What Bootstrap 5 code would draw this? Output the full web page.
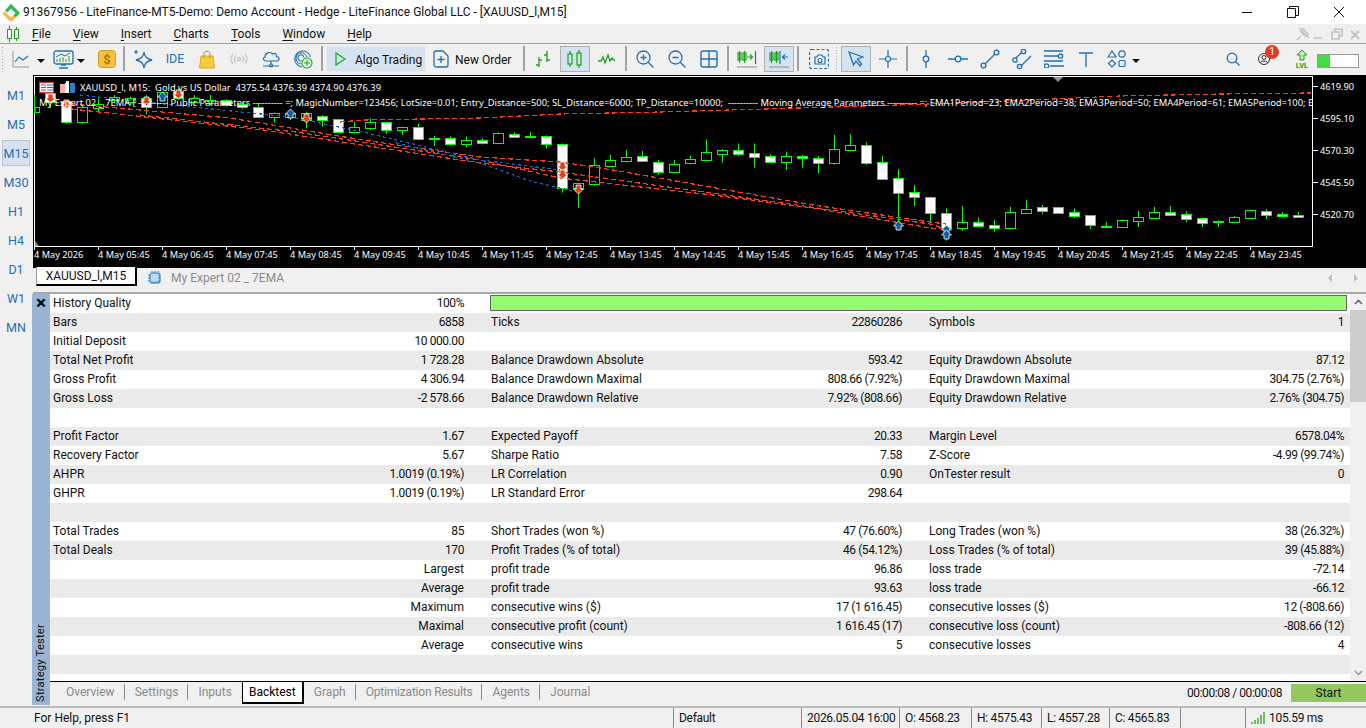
<!DOCTYPE html>
<html lang="en">
<head>
    <meta charset="UTF-8">
    <meta name="viewport" content="width=device-width, initial-scale=1.0">
    <title>LiteFinance MT5 - Strategy Tester</title>
    <link href="https://cdn.jsdelivr.net/npm/bootstrap@5.3.0/dist/css/bootstrap.min.css" rel="stylesheet">
    <style>
        html, body { height: 100%; overflow: hidden; }
        body { font-family: Roboto, "Liberation Sans", sans-serif; font-size: 12px; line-height: 16px; color: #111; background: #f0f0f0; }
        .app-shell { width: 1366px; height: 728px; }
        .title-bar { height: 24px; background: #fff; padding-left: 2px; }
        .title-logo { margin-right: 3px; flex: none; }
        .win-ctl { width: 46px; height: 24px; }
        .menu-bar { height: 19px; padding-left: 6px; background: #f0f0f0; }
        .menu-entry { margin-right: 22px; }
        .menu-entry u { text-underline-offset: 2px; }
        .tool-bar { height: 32px; border-top: 1px solid #a0a0a0; padding-top: 2px; background: #f0f0f0; }
        .grip { width: 3px; height: 26px; flex: none; background-image: radial-gradient(#aaa 1px, transparent 1px); background-size: 3px 3px; }
        .grip-first { margin: 0 1px 0 1px; }
        .grip-mid { margin-right: 3px; }
        .tb-btn { width: 32px; height: 26px; flex: none; }
        .tb-active { background: #d5e3f1; box-shadow: inset 0 0 0 1px #b0b0b0; width: 30px; margin: 0 1px; }
        .tb-sep { width: 2px; height: 25px; margin: 0 2px; background: #a2a2a2; flex: none; }
        .algo-btn { width: 100px; height: 26px; margin-left: 1px; margin-right: 4px; background: #d5e3f1; border: 1px solid #e4ecf4; padding-left: 8px; gap: 9px; }
        .order-btn { width: 91px; height: 26px; padding-left: 3px; gap: 6px; }
        .btn-text { padding-top: 2px; }
        .caret-down { width: 0; height: 0; flex: none; border-left: 4px solid transparent; border-right: 4px solid transparent; border-top: 4px solid #111; }
        .blue-label { color: #1f6fb5; font-size: 12.5px; }
        .user-badge { left: 17px; top: -1px; width: 14px; height: 14px; background: #e23a2a; font-size: 11px; line-height: 14px; }
        .level-meter { width: 42px; height: 14px; margin: 0 7px 0 -1px; border: 1px solid #999; --bs-progress-bar-bg: #43dd43; }
        .tf-col { width: 33px; flex: none; padding-top: 7px; gap: 3px; color: #1f6fb5; font-size: 12.5px; }
        .tf-item { width: 28px; height: 26px; margin-left: 2px; padding-top: 2px; }
        .tf-on { background: #d5e3f1; box-shadow: inset 0 0 0 1px #b8c4d0; }
        .chart-box { height: 193px; background: #000; }
        .chart-box svg { display: block; }
        .chart-text { font-family: "Noto Sans", "Liberation Sans", sans-serif; font-size: 9.2px; fill: #fff; }
        .chart-long { font-size: 9.35px; }
        .doc-tabs { height: 24px; }
        .doc-tab { width: 101px; height: 19px; margin: -1px 0 0 3px; background: #fff; border: 1px solid #999; border-right: 2px solid #000; border-bottom: 2px solid #000; border-top: 0; }
        .doc-other { height: 20px; color: #8a8a8a; margin-left: 11px; gap: 9px; }
        .tester-wrap { border-top: 2px solid #a8a8a8; height: 412px; }
        .tester-stripe { width: 18px; margin-left: -1px; background: #9ab5d3; flex: none; position: relative; }
        .tester-close { font-size: 19px; font-weight: 700; line-height: 18px; color: #000; }
        .tester-name { position: absolute; left: 1px; bottom: 3px; width: 17px; writing-mode: vertical-rl; transform: rotate(180deg); line-height: 15px; font-size: 11.2px; letter-spacing: .2px; }
        .report-area { height: 387px; background: #fff; }
        .report-scroll { width: 16px; background: #f0f0f0; flex: none; }
        .scroll-up { height: 16px; }
        .scroll-thumb { height: 92px; background: #cdcdcd; }
        .scroll-down { height: 16px; }
        .report-table { width: 1300px; table-layout: fixed; --bs-table-bg: transparent; --bs-table-color: #111; margin: 0; }
        .report-table td { height: 19px; padding: 0 3px; line-height: 18px; white-space: nowrap; overflow: hidden; }
        .report-table tr:nth-child(even) td { background: #eaeaea; }
        .report-table .lbl2 { padding-left: 21px; }
        .report-table .num { text-align: right; padding-right: 6px; }
        .report-table .digits { letter-spacing: -.42px; }
        .quality-bar { height: 16px; margin: 1px 3px 0 20px; background: #fff; border: 1px solid #666; border-radius: 0; --bs-progress-bar-bg: #93fc72; }
        .tester-foot { height: 24px; border-top: 1px solid #000; }
        .foot-group { height: 20px; }
        .foot-tab { color: #8a8a8a; padding: 0 9px 0 10px; height: 16px; line-height: 16px; border-right: 1px solid #8a8a8a; }
        .foot-tab-last { border-right: 0; }
        .foot-tab-long { letter-spacing: -.2px; }
        .foot-on { width: 62px; height: 23px; line-height: 21px; margin: -1px 0 0 1px; text-align: center; color: #000; background: #fff; border: 1px solid #000; border-bottom: 2px solid #000; border-right: 2px solid #000; }
        .foot-pre { padding-left: 6px; }
        .foot-after { padding-left: 0; }
        .foot-time { margin-right: 9px; line-height: 22px; letter-spacing: -.45px; }
        .start-btn { width: 75px; height: 18px; background: #92c85f; color: #111; text-align: center; line-height: 18px; margin-top: 2px; }
        .status-bar { height: 22px; border-top: 2px solid #b8b8b8; padding-left: 34px; }
        .status-help { width: 639px; line-height: 20px; flex: none; }
        .status-cell { height: 20px; line-height: 20px; border-left: 1px solid #8c8c8c; padding-left: 5px; flex: none; white-space: nowrap; letter-spacing: -.3px; }
    </style>
</head>
<body>
<div class="app-shell d-flex flex-column">
    <div class="title-bar d-flex align-items-center">
        <svg width="18" height="18" viewBox="0 0 17 17" class="title-logo">
            <path d="M1.500 9L8.500 16L12.500 12" stroke="#f6b73c" stroke-width="3" fill="none"/>
            <path d="M4 8L8.500 3L15 9.500L12 12.500" stroke="#2fb457" stroke-width="3" fill="none"/>
        </svg>
        <span>91367956 - LiteFinance-MT5-Demo: Demo Account - Hedge - LiteFinance Global LLC - [XAUUSD_l,M15]</span>
        <div class="ms-auto d-flex me-1">
            <div class="win-ctl d-flex align-items-center justify-content-center"><svg width="12" height="12"><path d="M1 6.500H11" stroke="#111"/></svg></div>
            <div class="win-ctl d-flex align-items-center justify-content-center"><svg width="12" height="12"><path d="M0.500 2.500H8.500V11.500H0.500ZM2.500 2.500V0.500H11.500V9.500H8.500" stroke="#111" fill="none"/></svg></div>
            <div class="win-ctl d-flex align-items-center justify-content-center"><svg width="12" height="12"><path d="M1 1L11 11M11 1L1 11" stroke="#111"/></svg></div>
        </div>
    </div>

    <div class="menu-bar d-flex align-items-center">
        <svg width="14" height="16" viewBox="0 0 14 16" class="me-2">
            <g stroke="#1aa31a" fill="none"><path d="M3.500 0V16M10.500 1V15"/><rect x="1.500" y="3.500" width="4" height="9" fill="#fff"/><rect x="8.500" y="3.500" width="4" height="9" fill="#fff"/></g>
        </svg>
        <span class="menu-entry ms-1"><u>F</u>ile</span>
        <span class="menu-entry"><u>V</u>iew</span>
        <span class="menu-entry"><u>I</u>nsert</span>
        <span class="menu-entry"><u>C</u>harts</span>
        <span class="menu-entry"><u>T</u>ools</span>
        <span class="menu-entry"><u>W</u>indow</span>
        <span class="menu-entry"><u>H</u>elp</span>
        <svg class="ms-auto me-1" width="70" height="14" viewBox="-4 0 70 14">
            <g stroke="#c4c4c4" stroke-width="1.600" fill="none">
                <path d="M1 13L5 9M4 4L10 10M6 1L13 8M3 1L13 11"/>
                <path d="M18 11H26"/>
                <path d="M36 5H43V12H36ZM39 5V2H46V9H43"/>
                <path d="M55 4L63 12M63 4L55 12" stroke-width="2"/>
            </g>
        </svg>
    </div>

    <div class="tool-bar d-flex align-items-start">
        <div class="grip grip-first"></div>
        <div class="tb-btn d-flex align-items-center justify-content-center">
            <svg width="18" height="18" viewBox="0 0 18 18" fill="none"><path d="M1 1V17H17" stroke="#8c9aa8"/><path d="M3 12L7 7L11 10L16 6" stroke="#1f6fb5" stroke-width="1.200"/></svg>
        </div>
        <div class="caret-down align-self-center" style="margin-right:6px"></div>
        <div class="tb-btn d-flex align-items-center justify-content-center" style="width:24px">
            <svg width="21" height="19" viewBox="0 0 21 19" fill="none"><rect x="1" y="1" width="19" height="13" rx="2" stroke="#1f6fb5" stroke-width="1.300"/><path d="M6 18H15M8 15H13" stroke="#1f6fb5" stroke-width="1.300"/><path d="M4 12V9M7 12V8M10 12V7M13 12V9M16 12V6" stroke="#1aa31a"/><path d="M3 7L8 4L12 6L17 3" stroke="#1f6fb5"/></svg>
        </div>
        <div class="caret-down align-self-center" style="margin:0 7px 0 2px"></div>
        <div class="tb-btn d-flex align-items-center justify-content-center" style="width:29px">
            <svg width="18" height="18" viewBox="0 0 18 18"><rect x=".5" y=".5" width="17" height="17" rx="3" fill="#f5c242" stroke="#d19f1f"/><text x="9" y="14" text-anchor="middle" font-size="13" font-weight="700" fill="#a87a12" font-family="Roboto, sans-serif">$</text></svg>
        </div>
        <div class="tb-sep"></div>
        <div class="tb-btn d-flex align-items-center justify-content-center">
            <svg width="20" height="20" viewBox="0 0 20 20" fill="none" stroke="#1f6fb5" stroke-width="1.300"><path d="M11 3C11.800 8 13 9.500 19 11C13 12.500 11.800 14 11 19C10.200 14 9 12.500 3 11C9 9.500 10.200 8 11 3Z"/><path d="M3 1V5M1 3H5" stroke-width="1.200"/></svg>
        </div>
        <div class="tb-btn d-flex align-items-center justify-content-center blue-label">IDE</div>
        <div class="tb-btn d-flex align-items-center justify-content-center">
            <svg width="16" height="19" viewBox="0 0 16 19"><path d="M2 6H14L15.500 18H.5Z" fill="#f6cb3c" stroke="#d9a826"/><path d="M5 8V3.500C5 .5 11 .5 11 3.500V8" fill="none" stroke="#b88c1c"/></svg>
        </div>
        <div class="tb-btn d-flex align-items-center justify-content-center">
            <svg width="18" height="12" viewBox="0 0 18 12" fill="none" stroke="#c4c4c4" stroke-width="1.200"><circle cx="9" cy="6" r="1.600"/><path d="M5.500 2.500C4 4.500 4 7.500 5.500 9.500M12.500 2.500C14 4.500 14 7.500 12.500 9.500M3 1C.5 4 .5 8 3 11M15 1C17.500 4 17.500 8 15 11"/></svg>
        </div>
        <div class="tb-btn d-flex align-items-center justify-content-center">
            <svg width="18" height="17" viewBox="0 0 18 17" fill="none" stroke="#1f6fb5" stroke-width="1.200"><path d="M4 10C1 10 0.500 6.500 3 6C3 2 8 0 10.500 3C13 1.500 15 3.500 14.500 5.500C17.500 5.500 18 10 14.500 10Z"/><path d="M9 10V13M1 15H17"/><circle cx="9" cy="14.500" r="1.500"/></svg>
        </div>
        <div class="tb-btn d-flex align-items-center justify-content-center">
            <svg width="20" height="20" viewBox="0 0 20 20" fill="none" stroke="#1f6fb5" stroke-width="1.100"><path d="M9 18A8 8 0 1 1 17.500 8M8.500 15A5.500 5.500 0 1 1 14 8.500M8.500 12A3 3 0 1 1 11 8.500"/><circle cx="14" cy="14" r="5" fill="#eaf7ea" stroke="#1aa31a"/><path d="M14 11V17M11 14H17" stroke="#1aa31a"/></svg>
        </div>
        <div class="tb-sep"></div>
        <div class="algo-btn d-flex align-items-center">
            <svg width="11" height="14" viewBox="0 0 11 14"><path d="M1 1L10 7L1 13Z" fill="none" stroke="#1aa31a" stroke-width="1.200"/></svg>
            <span class="btn-text">Algo Trading</span>
        </div>
        <div class="order-btn d-flex align-items-center">
            <svg width="16" height="18" viewBox="0 0 16 18" fill="none" stroke="#1f6fb5" stroke-width="1.300"><path d="M1 3A2 2 0 0 1 3 1H10L15 6V15A2 2 0 0 1 13 17H3A2 2 0 0 1 1 15ZM8 6V13M4.500 9.500H11.500"/></svg>
            <span class="btn-text">New Order</span>
        </div>
        <div class="tb-sep"></div>
        <div class="tb-btn d-flex align-items-center justify-content-center">
            <svg width="18" height="18" viewBox="0 0 18 18" fill="none" stroke="#1aa31a" stroke-width="1.300"><path d="M5 7V17M2 15H5M5 10H8M13 1V12M10 5H13M13 10H16"/></svg>
        </div>
        <div class="tb-btn tb-active d-flex align-items-center justify-content-center">
            <svg width="16" height="18" viewBox="0 0 16 18" fill="none" stroke="#1aa31a" stroke-width="1.200"><path d="M3 1V17M12 0V18"/><rect x="1" y="4" width="4" height="10" fill="#d5e3f1"/><rect x="10" y="3" width="4" height="12" fill="#d5e3f1"/></svg>
        </div>
        <div class="tb-btn d-flex align-items-center justify-content-center">
            <svg width="18" height="12" viewBox="0 0 18 12" fill="none" stroke="#1aa31a" stroke-width="1.300"><path d="M0 8H3L5 4L7 10L10 2L12 8L14 5L17 8"/></svg>
        </div>
        <div class="tb-sep"></div>
        <div class="tb-btn d-flex align-items-center justify-content-center">
            <svg width="18" height="18" viewBox="0 0 18 18" fill="none" stroke="#1f6fb5" stroke-width="1.300"><circle cx="7.500" cy="7.500" r="6.500"/><path d="M12 12L17.500 17.500M7.500 4.500V10.500M4.500 7.500H10.500"/></svg>
        </div>
        <div class="tb-btn d-flex align-items-center justify-content-center">
            <svg width="18" height="18" viewBox="0 0 18 18" fill="none" stroke="#1f6fb5" stroke-width="1.300"><circle cx="7.500" cy="7.500" r="6.500"/><path d="M12 12L17.500 17.500M4.500 7.500H10.500"/></svg>
        </div>
        <div class="tb-btn d-flex align-items-center justify-content-center">
            <svg width="18" height="18" viewBox="0 0 18 18" fill="none" stroke="#1f6fb5" stroke-width="1.400"><rect x="1" y="1" width="16" height="16" rx="2"/><path d="M9 1V17M1 9H17"/></svg>
        </div>
        <div class="tb-sep"></div>
        <div class="tb-btn d-flex align-items-center justify-content-center">
            <svg width="20" height="18" viewBox="0 0 20 18" fill="none" stroke-width="1.200"><g stroke="#1aa31a"><path d="M2.500 1V13M7.500 1V13"/><rect x="1" y="3" width="3" height="7"/><rect x="6" y="3" width="3" height="7"/><path d="M10 7H15M13 4.500L15.500 7L13 9.500"/></g><path d="M18.500 1V14" stroke="#1f6fb5"/><path d="M0 17H20" stroke="#999"/></svg>
        </div>
        <div class="tb-btn tb-active d-flex align-items-center justify-content-center">
            <svg width="20" height="18" viewBox="0 0 20 18" fill="none" stroke-width="1.200"><g stroke="#1aa31a"><path d="M2.500 1V13M7.500 1V13"/><rect x="1" y="3" width="3" height="7"/><rect x="6" y="3" width="3" height="7"/></g><path d="M11 1V14" stroke="#1f6fb5"/><path d="M19 7H14M16 4.500L13.500 7L16 9.500" stroke="#1f6fb5"/><path d="M0 17H20" stroke="#999"/></svg>
        </div>
        <div class="tb-sep"></div>
        <div class="tb-btn d-flex align-items-center justify-content-center" style="margin-left:2px">
            <svg width="20" height="20" viewBox="0 0 20 20" fill="none" stroke="#1f6fb5" stroke-width="1.200"><rect x=".5" y=".5" width="19" height="19" rx="2" stroke-dasharray="3 2"/><path d="M6 8H8L9 6H13L14 8H16V15H6Z"/><circle cx="11" cy="11.500" r="2"/></svg>
        </div>
        <div class="grip grip-mid"></div>
        <div class="tb-btn tb-active d-flex align-items-center justify-content-center" style="margin:0">
            <svg width="16" height="16" viewBox="0 0 16 16" fill="none" stroke="#1f6fb5" stroke-width="1.300"><path d="M1 1L15 6L9.500 8L13.500 13L12 15L8 10L5.500 14Z"/></svg>
        </div>
        <div class="tb-btn d-flex align-items-center justify-content-center" style="margin-left:1px">
            <svg width="18" height="18" viewBox="0 0 18 18" fill="none" stroke="#1f6fb5" stroke-width="1.200"><path d="M9 0V6M9 12V18M0 9H6M12 9H18"/><circle cx="9" cy="9" r="2.500"/></svg>
        </div>
        <div class="tb-sep"></div>
        <div class="tb-btn d-flex align-items-center justify-content-center">
            <svg width="8" height="18" viewBox="0 0 8 18" fill="none" stroke="#1f6fb5" stroke-width="1.300"><path d="M4 0V6M4 12V18"/><circle cx="4" cy="9" r="2.800"/></svg>
        </div>
        <div class="tb-btn d-flex align-items-center justify-content-center">
            <svg width="20" height="8" viewBox="0 0 20 8" fill="none" stroke="#1f6fb5" stroke-width="1.300"><path d="M0 4H7M13 4H20"/><circle cx="10" cy="4" r="2.800"/></svg>
        </div>
        <div class="tb-btn d-flex align-items-center justify-content-center">
            <svg width="20" height="20" viewBox="0 0 20 20" fill="none" stroke="#1f6fb5" stroke-width="1.300"><path d="M5 15L15 5"/><circle cx="3.500" cy="16.500" r="2.400"/><circle cx="16.500" cy="3.500" r="2.400"/></svg>
        </div>
        <div class="tb-btn d-flex align-items-center justify-content-center">
            <svg width="20" height="20" viewBox="0 0 20 20" fill="none" stroke="#1f6fb5" stroke-width="1.300"><path d="M4 9L10 3M9 17L19 7"/><circle cx="3" cy="11" r="2.200"/><circle cx="11.500" cy="2.500" r="2.200"/><circle cx="7.500" cy="17.500" r="2.200"/></svg>
        </div>
        <div class="tb-btn d-flex align-items-center justify-content-center">
            <svg width="20" height="18" viewBox="0 0 20 18" fill="none" stroke="#1f6fb5" stroke-width="1.300"><path d="M0 1H19M0 6H14M0 11H19M6 16H20"/><circle cx="16.500" cy="6" r="2.200"/><circle cx="2.500" cy="16" r="2.200"/></svg>
        </div>
        <div class="tb-btn d-flex align-items-center justify-content-center">
            <svg width="14" height="15" viewBox="0 0 14 15" fill="none" stroke="#1f6fb5" stroke-width="1.300"><path d="M0 1H14M7 1V15"/></svg>
        </div>
        <div class="tb-btn d-flex align-items-center justify-content-center" style="width:30px">
            <svg width="20" height="18" viewBox="0 0 20 18" fill="none" stroke="#1f6fb5" stroke-width="1.200"><path d="M5 1L9 7H1Z"/><circle cx="15" cy="4" r="3.200"/><path d="M5 10L8.500 13.500L5 17L1.500 13.500Z"/><rect x="12" y="10.500" width="6" height="6" rx="1"/></svg>
        </div>
        <div class="caret-down align-self-center"></div>

        <div class="tb-btn ms-auto d-flex align-items-center justify-content-center" style="margin-right:-1px">
            <svg width="14" height="14" viewBox="0 0 14 14" fill="none" stroke="#1f6fb5" stroke-width="1.300"><circle cx="6" cy="6" r="4.800"/><path d="M9.500 9.500L13.500 13.500"/></svg>
        </div>
        <div class="tb-btn d-flex align-items-center justify-content-center position-relative" style="margin-right:6px">
            <svg width="12" height="12" viewBox="0 0 12 12" fill="none" stroke="#333" stroke-width="1"><circle cx="6" cy="6" r="5.500"/><circle cx="6" cy="4.500" r="2"/><path d="M2 10C3 7.500 9 7.500 10 10"/></svg>
            <span class="position-absolute rounded-circle text-white text-center user-badge">1</span>
        </div>
        <div class="tb-btn d-flex align-items-center justify-content-center">
            <svg width="18" height="20" viewBox="0 0 18 20"><path d="M9 1L14 6H11V11H7V6H4Z" fill="#bfe8bf" stroke="#1aa31a"/><text x="9" y="19" text-anchor="middle" font-size="7.500" font-weight="700" fill="#1aa31a" font-family="Roboto, sans-serif">LVL</text></svg>
        </div>
        <div class="progress rounded-0 align-self-center bg-white level-meter">
            <div class="progress-bar" style="width:30%"></div>
        </div>
    </div>

    <div class="d-flex flex-grow-1">
        <div class="tf-col d-flex flex-column">
            <div class="tf-item d-flex align-items-center justify-content-center">M1</div>
            <div class="tf-item d-flex align-items-center justify-content-center">M5</div>
            <div class="tf-item tf-on d-flex align-items-center justify-content-center">M15</div>
            <div class="tf-item d-flex align-items-center justify-content-center">M30</div>
            <div class="tf-item d-flex align-items-center justify-content-center">H1</div>
            <div class="tf-item d-flex align-items-center justify-content-center">H4</div>
            <div class="tf-item d-flex align-items-center justify-content-center">D1</div>
            <div class="tf-item d-flex align-items-center justify-content-center">W1</div>
            <div class="tf-item d-flex align-items-center justify-content-center">MN</div>
        </div>

        <div class="flex-grow-1 d-flex flex-column">
            <div class="chart-box">
                <svg id="chart" width="1333" height="193" viewBox="33 75 1333 193"></svg>
            </div>

            <div class="doc-tabs d-flex align-items-start">
                <div class="doc-tab d-flex align-items-center justify-content-center">XAUUSD_l,M15</div>
                <div class="doc-other d-flex align-items-center">
                    <svg width="14" height="14" viewBox="0 0 14 14"><rect x="2" y="2" width="10" height="10" rx="1.500" fill="#b9dcf5" stroke="#1f6fb5"/><path d="M4 0V14M7 0V14M10 0V14M0 4H14M0 7H14M0 10H14" stroke="#1f6fb5" stroke-dasharray="1.500 9"/></svg>
                    <span>My Expert 02 _ 7EMA</span>
                </div>
                <svg class="ms-auto me-2 mt-1" width="30" height="12" viewBox="0 0 30 12"><path d="M4 2L0 6L4 10ZM26 2L30 6L26 10Z" fill="#bcbcbc"/></svg>
            </div>

            <div class="tester-wrap d-flex flex-column">
                <div class="d-flex flex-grow-1">
                    <div class="tester-stripe d-flex flex-column align-items-center">
                        <div class="tester-close">×</div>
                        <div class="tester-name">Strategy Tester</div>
                    </div>
                    <div class="flex-grow-1 d-flex flex-column">
                        <div class="d-flex">
                            <div class="report-area flex-grow-1">
                                <table class="table table-borderless report-table">
                                    <colgroup><col style="width:210px"><col style="width:210px"><col style="width:219px"><col style="width:219px"><col style="width:221px"><col style="width:221px"></colgroup>
                                    <tbody id="report"></tbody>
                                </table>
                            </div>
                            <div class="report-scroll d-flex flex-column">
                                <div class="scroll-up d-flex align-items-center justify-content-center"><svg width="9" height="6"><path d="M1 5L4.500 1.500L8 5" stroke="#606060" stroke-width="1.600" fill="none"/></svg></div>
                                <div class="scroll-thumb"></div>
                                <div class="flex-grow-1"></div>
                                <div class="scroll-down d-flex align-items-center justify-content-center"><svg width="9" height="6"><path d="M1 1L4.500 4.500L8 1" stroke="#a0a0a0" stroke-width="1.600" fill="none"/></svg></div>
                            </div>
                        </div>
                        <div class="tester-foot d-flex align-items-start">
                            <div class="d-flex align-items-center foot-group foot-pre">
                                <span class="foot-tab">Overview</span>
                                <span class="foot-tab">Settings</span>
                                <span class="foot-tab foot-tab-last">Inputs</span>
                            </div>
                            <div class="foot-on">Backtest</div>
                            <div class="d-flex align-items-center foot-group foot-after">
                                <span class="foot-tab">Graph</span>
                                <span class="foot-tab foot-tab-long">Optimization Results</span>
                                <span class="foot-tab">Agents</span>
                                <span class="foot-tab foot-tab-last">Journal</span>
                            </div>
                            <span class="ms-auto foot-time">00:00:08 / 00:00:08</span>
                            <div class="start-btn">Start</div>
                        </div>
                    </div>
                </div>
            </div>
        </div>
    </div>

    <div class="status-bar d-flex">
        <div class="status-help">For Help, press F1</div>
        <div class="status-cell" style="width:128px">Default</div>
        <div class="status-cell" style="width:98px">2026.05.04 16:00</div>
        <div class="status-cell" style="width:72px">O: 4568.23</div>
        <div class="status-cell" style="width:70px">H: 4575.43</div>
        <div class="status-cell" style="width:68px">L: 4557.28</div>
        <div class="status-cell" style="width:71px">C: 4565.83</div>
        <div class="status-cell" style="width:65px"></div>
        <div class="status-cell d-flex align-items-center gap-1">
            <svg width="14" height="12" viewBox="0 0 14 12" stroke="#3aa52f" stroke-width="1.400"><path d="M1 12V10M4 12V8M7 12V6M10 12V3M13 12V0"/></svg>
            <span>105.59 ms</span>
        </div>
    </div>
</div>

<script src="https://cdn.jsdelivr.net/npm/bootstrap@5.3.0/dist/js/bootstrap.bundle.min.js"></script>
<script>
document.addEventListener("DOMContentLoaded", function () {
    // report rows: label, value x3
    const rows = [
        ["History Quality", "100%", "BAR"],
        ["Bars", "6858", "Ticks", "22860286", "Symbols", "1"],
        ["Initial Deposit", "10 000.00", "", "", "", ""],
        ["Total Net Profit", "1 728.28", "Balance Drawdown Absolute", "593.42", "Equity Drawdown Absolute", "87.12"],
        ["Gross Profit", "4 306.94", "Balance Drawdown Maximal", "808.66 (7.92%)", "Equity Drawdown Maximal", "304.75 (2.76%)"],
        ["Gross Loss", "-2 578.66", "Balance Drawdown Relative", "7.92% (808.66)", "Equity Drawdown Relative", "2.76% (304.75)"],
        ["", "", "", "", "", ""],
        ["Profit Factor", "1.67", "Expected Payoff", "20.33", "Margin Level", "6578.04%"],
        ["Recovery Factor", "5.67", "Sharpe Ratio", "7.58", "Z-Score", "-4.99 (99.74%)"],
        ["AHPR", "1.0019 (0.19%)", "LR Correlation", "0.90", "OnTester result", "0"],
        ["GHPR", "1.0019 (0.19%)", "LR Standard Error", "298.64", "", ""],
        ["", "", "", "", "", ""],
        ["Total Trades", "85", "Short Trades (won %)", "47 (76.60%)", "Long Trades (won %)", "38 (26.32%)"],
        ["Total Deals", "170", "Profit Trades (% of total)", "46 (54.12%)", "Loss Trades (% of total)", "39 (45.88%)"],
        ["", "Largest", "profit trade", "96.86", "loss trade", "-72.14"],
        ["", "Average", "profit trade", "93.63", "loss trade", "-66.12"],
        ["", "Maximum", "consecutive wins ($)", "17 (1 616.45)", "consecutive losses ($)", "12 (-808.66)"],
        ["", "Maximal", "consecutive profit (count)", "1 616.45 (17)", "consecutive loss (count)", "-808.66 (12)"],
        ["", "Average", "consecutive wins", "5", "consecutive losses", "4"],
        ["", "", "", "", "", ""]
    ];
    const num = v => `<td class="num${/^[-\d]/.test(v) ? " digits" : ""}">${v}</td>`;
    document.getElementById("report").innerHTML = rows.map(function (r) {
        if (r[2] === "BAR") {
            return `<tr><td>${r[0]}</td>${num(r[1])}<td colspan="4" class="p-0"><div class="progress quality-bar"><div class="progress-bar" style="width:100%"></div></div></td></tr>`;
        }
        return `<tr><td>${r[0]}</td>${num(r[1])}<td class="lbl2">${r[2]}</td>${num(r[3])}<td class="lbl2">${r[4]}</td>${num(r[5])}</tr>`;
    }).join("");

    // candles, read off the picture at 3x: [high, bodyTop, bodyBottom, low, white?]
    const candles = [
        [60,95,110,115,0],[45,55,80,100,1],[75,78,140,146,1],[90,97,140,146,0],[70,88,100,108,0],[60,66,76,85,0],[65,70,82,90,0],[60,70,95,118,1],
        [50,52,95,98,0],[40,48,70,75,1],[60,70,82,85,0],[60,76,84,90,0],[72,76,90,95,1],[82,87,97,102,1],[85,97,125,130,1],[113,115,125,143,0],
        [105,113,127,135,0],[110,115,135,160,0],[120,122,136,155,1],[130,133,170,172,1],[140,157,170,175,0],[130,142,158,165,0],[140,142,166,177,1],[155,157,166,180,0],
        [147,157,193,196,1],[183,188,191,213,1],[184,190,208,212,1],[184,196,208,217,0],[190,195,203,208,1],[172,175,203,207,0],[172,176,185,189,1],[171,184,186,189,1],
        [181,184,208,221,1],[205,208,338,353,1],[325,325,338,398,0],[250,271,326,333,0],[240,256,272,274,0],[225,247,257,262,0],[228,244,257,260,1],[255,260,292,299,1],
        [255,268,292,294,0],[243,253,265,268,0],[193,232,254,256,0],[222,226,236,263,0],[205,226,236,243,1],[205,235,245,278,1],[238,244,262,264,1],[230,244,262,285,0],
        [240,243,250,278,1],[243,250,265,294,1],[180,223,263,269,0],[178,211,224,228,0],[202,211,263,270,1],[243,262,311,315,1],[282,310,353,450,1],[330,352,365,393,1],
        [365,365,415,445,1],[400,415,460,497,1],[393,442,460,467,0],[427,442,452,456,1],[435,450,458,470,1],[396,412,458,460,0],[375,403,413,417,0],[390,396,407,417,1],
        [395,397,413,416,1],[400,412,422,429,1],[420,421,451,462,1],[441,453,456,458,1],[434,436,455,459,0],[408,427,437,456,0],[396,412,428,432,0],[393,412,419,420,1],
        [408,418,431,441,1],[428,430,443,456,1],[436,439,442,456,1],[423,427,440,442,0],[405,406,428,429,0],[402,408,419,432,1],[411,417,423,427,1],[411,420,425,429,1]
    ];
    const Y = py => 75 + py / 3;
    let s = "";

    // plot frame, ticks and axis text
    s += `<rect x="34.500" y="76.500" width="1278" height="170" fill="none" stroke="#fff"/>`;
    s += `<path d="M35 246V241L39 246Z" fill="#889"/><path d="M1053 77H1063L1058 82Z" fill="#8a96a4"/>`;
    ["4619.90", "4595.10", "4570.30", "4545.50", "4520.70"].forEach(function (p, i) {
        const y = 86.500 + i * 32;
        s += `<path d="M1313 ${y}H1318" stroke="#fff"/><text class="chart-text" x="1320" y="${y + 3.500}">${p}</text>`;
    });
    s += `<path d="M34.500 246V250" stroke="#fff"/><text class="chart-text" x="34" y="258">4 May 2026</text>`;
    for (let h = 5; h <= 23; h++) {
        const x = 98 + (h - 5) * 64;
        s += `<path d="M${x + .5} 246V250" stroke="#fff"/><text class="chart-text" x="${x}" y="258">4 May ${String(h).padStart(2, "0")}:45</text>`;
    }

    // candles
    candles.forEach(function (c, k) {
        const x = 34.500 + 16 * k;
        const hi = Y(c[0]), t = Math.round(Y(c[1])) + .5, b = Math.round(Y(c[2])) + .5, lo = Y(c[3]);
        s += `<path d="M${x} ${hi}V${lo}" stroke="#0f0"/>`;
        const left = Math.max(x - 5, 35);
        s += `<rect x="${left}" y="${t}" width="${x + 5 - left}" height="${b - t}" fill="${c[4] ? "#fff" : "#000"}" stroke="#0f0"/>`;
    });

    // moving averages, traced at 3x in page coordinates
    const red = [
        [[72,104],[230,118],[363,140],[480,157],[560,162],[613,170],[813,205],[930,222],[946,224]],
        [[72,109],[263,130],[480,163],[560,172],[747,198],[930,224],[946,229]],
        [[140,115],[296,132],[480,160],[560,178],[713,195],[813,208],[930,228],[946,229]],
        [[340,122],[363,120],[480,118],[560,114],[660,112],[800,108],[930,104],[1030,100],[1120,96],[1220,94],[1311,93]]
    ];
    const blue = [
        [[80,95],[163,104],[290,117],[363,132],[480,160],[560,170]],
        [[396,143],[480,163],[530,181],[577,192]]
    ];
    const toPts = l => l.map(p => p.join(",")).join(" ");
    red.forEach(l => s += `<polyline points="${toPts(l)}" fill="none" stroke="#ff3a10" stroke-width="1.200" stroke-dasharray="5 3" shape-rendering="crispEdges"/>`);
    blue.forEach(l => s += `<polyline points="${toPts(l)}" fill="none" stroke="#0a64c8" stroke-width="1.200" stroke-dasharray="3 3" shape-rendering="crispEdges"/>`);

    // deal arrows
    const arrow = function (x, y, up) {
        const d = up ? 1 : -1;
        const col = up ? "#0b5fa5" : "#e0401c";
        return `<polygon points="${x},${y - 5 * d} ${x + 5},${y} ${x + 2.500},${y} ${x + 2.500},${y + 4 * d} ${x - 2.500},${y + 4 * d} ${x - 2.500},${y} ${x - 5},${y}" fill="${col}" stroke="#fff" stroke-width=".8"/>`;
    };
    [[50,98],[66,104],[146,101],[178,94],[306,118],[562,166],[562,174],[578,189]].forEach(a => s += arrow(a[0] + .5, a[1], false));
    [[162,97],[290,114],[898,226],[946,230],[946,235]].forEach(a => s += arrow(a[0] + .5, a[1], true));

    // chart header
    s += `<rect x="39.500" y="82.500" width="14" height="10" fill="#fff" stroke="#d33"/><path d="M41 85H46M41 87.500H46M41 90H46" stroke="#d33"/><path d="M47 85H53M47 87.500H53M47 90H53" stroke="#1f6fb5"/>`;
    s += `<rect x="60" y="84" width="5" height="9" fill="#f6b0a0"/><rect x="66" y="81" width="3" height="3" fill="#eee"/><rect x="70" y="83" width="5" height="10" fill="#2a80c8"/><rect x="65" y="83" width="4" height="10" fill="#fff"/>`;
    s += `<text class="chart-text chart-long" x="80" y="91" xml:space="preserve" style="white-space:pre">XAUUSD_l, M15:  Gold vs US Dollar  4375.54 4376.39 4374.90 4376.39</text>`;
    s += `<svg x="35" y="76" width="1278" height="40" viewBox="35 76 1278 40"><text class="chart-text chart-long" x="39" y="106" xml:space="preserve" style="white-space:pre">My Expert 02 _ 7EMA [ ---------- Public Parameters ---------- =; MagicNumber=123456; LotSize=0.01; Entry_Distance=500; SL_Distance=6000; TP_Distance=10000;  ---------- Moving Average Parameters ---------- =; EMA1Period=23; EMA2Period=38; EMA3Period=50; EMA4Period=61; EMA5Period=100; EMA6Period=150</text></svg>`;

    document.getElementById("chart").innerHTML = s;
});
</script>
</body>
</html>
